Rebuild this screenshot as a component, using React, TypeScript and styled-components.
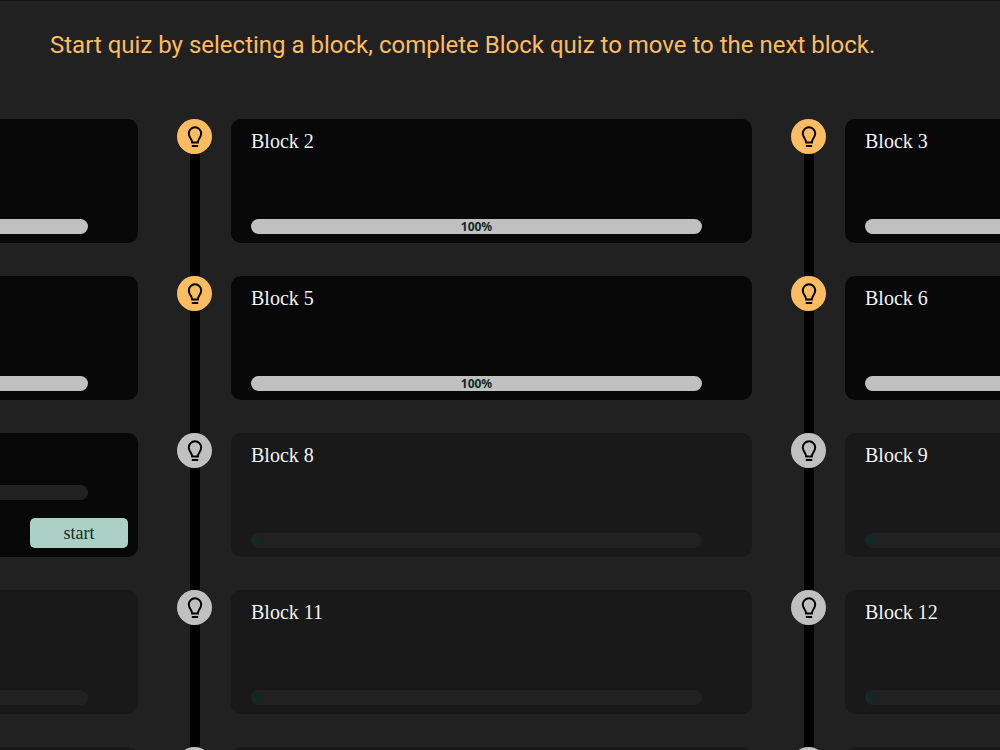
import React from "react";
import styled, { createGlobalStyle } from "styled-components";

const GlobalStyle = createGlobalStyle`
  * { box-sizing: border-box; }
  body { margin: 0; background: #212121; }
`;

type Status = "done" | "open" | "locked";

const Page = styled.main`
  height: 100vh;
  overflow: hidden;
  background: #212121;
  border-top: 1px solid #111;
`;

const Heading = styled.h1`
  margin: 0;
  padding: 28px 50px 58px;
  color: #fbbc62;
  font: 400 24px/32px Roboto, sans-serif;
`;

const Track = styled.div`
  display: flex;
  justify-content: center;
  gap: 39px;
  padding-right: 71px;
`;

const Column = styled.ol`
  flex: 0 0 auto;
  width: 57.5vw;
  margin: 0;
  padding: 0;
  list-style: none;
`;

const Step = styled.li`
  display: flex;
  gap: 19px;
`;

const Rail = styled.div`
  display: flex;
  flex-direction: column;
  align-items: center;
  width: 35px;
`;

const Badge = styled.span<{ $done: boolean }>`
  display: grid;
  place-items: center;
  width: 35px;
  height: 35px;
  border-radius: 50%;
  background: ${(p) => (p.$done ? "#fbbc62" : "#c0c0c0")};
`;

const Line = styled.span`
  flex: 1;
  width: 10px;
  background: #000;
`;

const Card = styled.section<{ $locked: boolean }>`
  display: flex;
  flex: 1;
  flex-direction: column;
  justify-content: space-between;
  height: 124px;
  margin-bottom: 33px;
  padding: 10px 10px 9px 20px;
  border-radius: 10px;
  background: ${(p) => (p.$locked ? "#191919" : "#080808")};
`;

const Title = styled.h2`
  margin: 0;
  color: #f4f4f4;
  font: 400 20px/24px "Liberation Serif", serif;
`;

const Meter = styled.div`
  height: 15px;
  margin-right: 40px;
  border-radius: 8px;
  background: #212121;
  overflow: hidden;
`;

const Fill = styled.div<{ $full: boolean }>`
  width: ${(p) => (p.$full ? "100%" : "0")};
  height: 15px;
  background: #c0c0c0;
  color: ${(p) => (p.$full ? "#0c2b28" : "#062e2a")};
  font: 700 12px/15px "Noto Sans", sans-serif;
  text-align: center;
`;

const StartButton = styled.button`
  align-self: flex-end;
  width: 98px;
  height: 30px;
  padding: 0;
  border: 0;
  border-radius: 5px;
  background: #abd1c6;
  color: #1c2b28;
  font: 400 18px/30px "Liberation Serif", serif;
`;

const Bulb = () => (
  <svg width="24" height="24" viewBox="0 0 24 24" fill="none" stroke="#000" strokeWidth="2" aria-hidden="true">
    <path d="M9.200 17.600C9.200 13.800 5.800 12.500 5.800 8.500a6.200 6.200 0 0 1 12.400 0c0 4-3.400 5.300-3.400 9.100" />
    <path d="M8.200 17.600h7.600M8.800 21h6.400" />
  </svg>
);

const statusOf = (n: number): Status => (n < 7 ? "done" : n === 7 ? "open" : "locked");

const Block = ({ number }: { number: number }) => {
  const status = statusOf(number);
  return (
    <Step>
      <Rail>
        <Badge $done={status === "done"}>
          <Bulb />
        </Badge>
        <Line />
      </Rail>
      <Card $locked={status === "locked"}>
        <Title>Block {number}</Title>
        <Meter>
          <Fill $full={status === "done"}>{status === "done" ? "100%" : "%"}</Fill>
        </Meter>
        {status === "open" && <StartButton type="button">start</StartButton>}
      </Card>
    </Step>
  );
};

export default function App() {
  return (
    <Page>
      <GlobalStyle />
      <Heading>Start quiz by selecting a block, complete Block quiz to move to the next block.</Heading>
      <Track>
        {[1, 2, 3].map((first) => (
          <Column key={first}>
            {[0, 3, 6, 9, 12].map((offset) => (
              <Block key={offset} number={first + offset} />
            ))}
          </Column>
        ))}
      </Track>
    </Page>
  );
}
